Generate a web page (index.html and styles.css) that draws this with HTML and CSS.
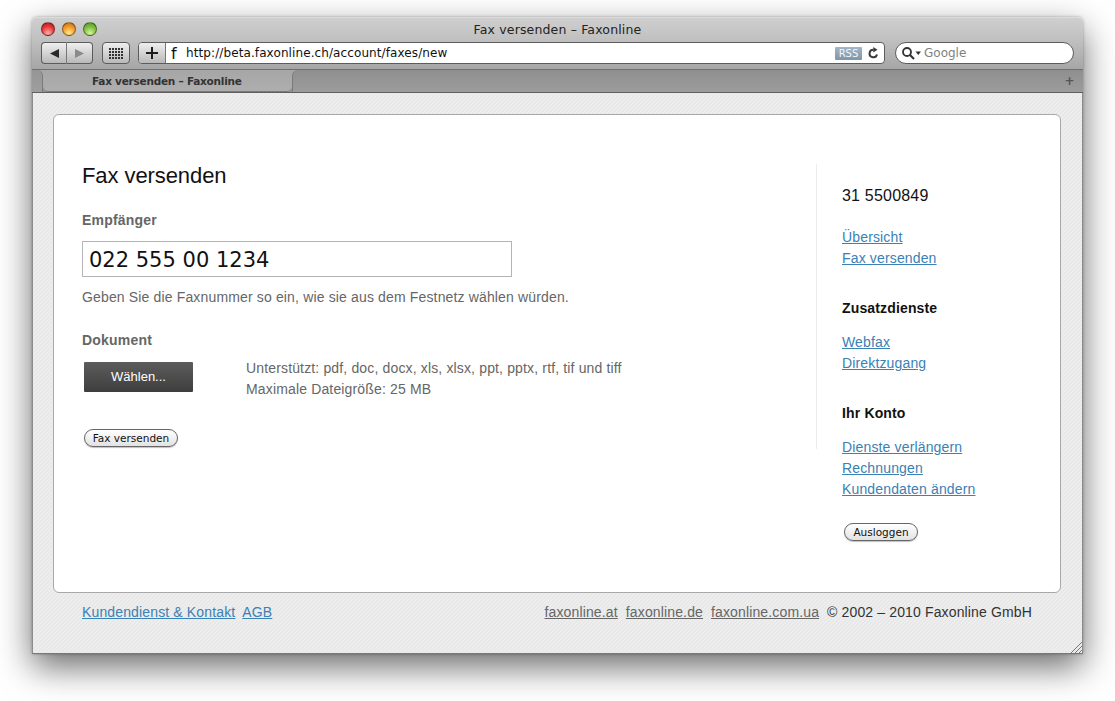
FILE: index.html
```html
<!DOCTYPE html>
<html lang="de">
<head>
<meta charset="utf-8">
<title>Fax versenden – Faxonline</title>
<link rel="stylesheet" href="styles.css">
</head>
<body>
<div class="window">
  <header class="chrome">
    <div class="titlebar">
      <div class="lights"><span class="light red"></span><span class="light amber"></span><span class="light green"></span></div>
      <div class="title">Fax versenden – Faxonline</div>
    </div>
    <div class="toolbar">
      <div class="btn-group">
        <span class="tool nav"><svg width="9" height="9" viewBox="0 0 9 9"><path d="M0 4.500 L9 0 V9 Z" fill="#2a2a2a"/></svg></span>
        <span class="tool nav"><svg width="9" height="9" viewBox="0 0 9 9"><path d="M9 4.500 L0 0 V9 Z" fill="#8a8a8a"/></svg></span>
      </div>
      <span class="tool grid-btn"><svg width="14" height="11" viewBox="0 0 14 11"><g fill="none" stroke="#333" stroke-width="2" stroke-dasharray="2 1"><path d="M0 1H14M0 4H14M0 7H14M0 10H14"/></g></svg></span>
      <div class="address">
        <span class="tool add"><svg width="12" height="12" viewBox="0 0 12 12"><path d="M5 0h2v5h5v2H7v5H5V7H0V5h5z" fill="#1c1c1c"/></svg></span>
        <span class="favicon">f</span>
        <span class="url">http://beta.faxonline.ch/account/faxes/new</span>
        <span class="rss">RSS</span>
        <svg class="reload" width="11" height="12" viewBox="0 0 11 12"><path d="M9 7.500A3.800 3.800 0 1 1 5.500 2.700" fill="none" stroke="#3a3a3a" stroke-width="2"/><path d="M5.300 0 L9.500 2.700 L5.300 5.400 Z" fill="#3a3a3a"/></svg>
      </div>
      <div class="search">
        <svg width="20" height="13" viewBox="0 0 20 13"><circle cx="5" cy="5" r="4" fill="none" stroke="#333" stroke-width="1.800"/><path d="M8 8 L12 12" stroke="#333" stroke-width="2.200"/><path d="M13.500 4.500 H19 L16.250 8 Z" fill="#333"/></svg>
        <span class="search-text">Google</span>
      </div>
    </div>
    <div class="tabbar">
      <span class="tab-stub"></span>
      <div class="tab">Fax versenden – Faxonline</div>
      <div class="tab-rest"><span class="tab-add">+</span></div>
    </div>
  </header>
  <main class="page">
    <div class="card">
      <section class="content">
        <h1>Fax versenden</h1>
        <h2 class="label">Empfänger</h2>
        <input class="fax-input" type="text" value="022 555 00 1234">
        <p class="hint">Geben Sie die Faxnummer so ein, wie sie aus dem Festnetz wählen würden.</p>
        <h2 class="label doc-label">Dokument</h2>
        <div class="upload">
          <span class="choose">Wählen...</span>
          <p class="formats">Unterstützt: pdf, doc, docx, xls, xlsx, ppt, pptx, rtf, tif und tiff<br>Maximale Dateigröße: 25 MB</p>
        </div>
        <button class="pill send" type="button">Fax versenden</button>
      </section>
      <aside class="sidebar">
        <div class="fax-no">31 5500849</div>
        <nav class="links"><a href="#">Übersicht</a><a href="#">Fax versenden</a></nav>
        <h3>Zusatzdienste</h3>
        <nav class="links"><a href="#">Webfax</a><a href="#">Direktzugang</a></nav>
        <h3>Ihr Konto</h3>
        <nav class="links"><a href="#">Dienste verlängern</a><a href="#">Rechnungen</a><a href="#">Kundendaten ändern</a></nav>
        <button class="pill logout" type="button">Ausloggen</button>
      </aside>
    </div>
    <footer class="footer">
      <div class="foot-left"><a href="#">Kundendienst &amp; Kontakt</a><a href="#">AGB</a></div>
      <div class="foot-right"><a href="#">faxonline.at</a><a href="#">faxonline.de</a><a href="#">faxonline.com.ua</a><span>© 2002 – 2010 Faxonline GmbH</span></div>
    </footer>
    <svg class="grip" width="12" height="12" viewBox="0 0 12 12"><path d="M1 12 L12 1 M5 12 L12 5 M9 12 L12 9" stroke="#777" stroke-width="1" fill="none"/></svg>
  </main>
</div>
</body>
</html>
```
FILE: styles.css
```css
* { box-sizing: border-box; }
html, body { margin: 0; height: 100%; }
body { background: #fff; font-family: "Liberation Sans", Arial, sans-serif; overflow: hidden; }

.window {
  position: absolute;
  left: 32px;
  top: 17px;
  width: 1051px;
  height: 637px;
  display: flex;
  flex-direction: column;
  border-radius: 5px 5px 0 0;
  box-shadow: 0 13px 34px rgba(0,0,0,.58), 0 0 3px rgba(0,0,0,.3);
}

/* Browser chrome */
.chrome { flex: none; }
.titlebar {
  height: 23px;
  position: relative;
  display: flex;
  align-items: center;
  justify-content: center;
  border-radius: 5px 5px 0 0;
  border-top: 1px solid #dcdcdc;
  background: linear-gradient(#cfcfcf, #c0c0c0);
}
.lights { position: absolute; left: 9px; top: 4px; display: flex; gap: 7px; }
.light { width: 14px; height: 14px; border-radius: 50%; border: 1px solid rgba(0,0,0,.4); }
.red { background: radial-gradient(circle at 50% 85%, #ffb0a8, #e5383a 55%, #a81a20); }
.amber { background: radial-gradient(circle at 50% 85%, #ffe88a, #f09a28 55%, #b9651a); }
.green { background: radial-gradient(circle at 50% 85%, #d8f59a, #7fbe40 55%, #4d8d27); }
.title { font: 12.500px "DejaVu Sans", sans-serif; letter-spacing: .15px; color: #222; }

.toolbar {
  height: 30px;
  display: flex;
  align-items: flex-start;
  padding: 2px 9px 0;
  background: linear-gradient(#c0c0c0, #a6a6a6);
  border-bottom: 1px solid #6f6f6f;
}
.tool {
  display: flex;
  align-items: center;
  justify-content: center;
  height: 22px;
  border: 1px solid #5c5c5c;
  background: linear-gradient(#efefef, #b9b9b9);
}
.btn-group { display: flex; }
.nav { width: 26px; }
.nav:first-child { border-radius: 4px 0 0 4px; border-right: 1px solid #777; }
.nav:last-child { border-radius: 0 4px 4px 0; border-left: 0; }
.grid-btn { width: 28px; margin-left: 9px; border-radius: 4px; }
.address {
  margin-left: 8px;
  width: 747px;
  height: 22px;
  display: flex;
  align-items: center;
  background: #fff;
  border: 1px solid #5c5c5c;
  border-radius: 4px;
}
.add { width: 27px; height: 20px; border: 0; border-right: 1px solid #777; border-radius: 3px 0 0 3px; flex: none; }
.favicon { font: 16px "DejaVu Sans", sans-serif; color: #111; margin-left: 5px; width: 15px; }
.url { flex: 1; font: 12px "DejaVu Sans", sans-serif; color: #111; letter-spacing: .1px; }
.rss {
  font: 10px "DejaVu Sans", sans-serif;
  color: #f4f6f8;
  background: linear-gradient(#a3b5c6, #7e95aa);
  border-radius: 1px;
  width: 27px;
  height: 13px;
  line-height: 13px;
  text-align: center;
}
.reload { margin: 0 5px 0 6px; }
.search {
  margin-left: 10px;
  width: 179px;
  height: 22px;
  display: flex;
  align-items: center;
  gap: 2px;
  padding-left: 6px;
  background: #fff;
  border: 1px solid #5c5c5c;
  border-radius: 11px;
}
.search-text { font: 12px "DejaVu Sans", sans-serif; color: #7f7f7f; }

.tabbar {
  height: 23px;
  display: flex;
  align-items: stretch;
  background: linear-gradient(#a6a6a6 0 15px, #969696 15px);
  border-bottom: 1px solid #5f5f5f;
}
.tab-stub { width: 11px; background: linear-gradient(#969696, #9e9e9e); border-right: 1px solid #7a7a7a; border-radius: 0 6px 0 0; }
.tab {
  width: 249px;
  background: linear-gradient(#a6a6a6, #aeaeae);
  border-bottom: 1px solid #7a7a7a;
  border-radius: 0 0 5px 5px;
  font: bold 10.500px/21px "DejaVu Sans", sans-serif;
  color: #333;
  padding-left: 49px;
  padding-top: 1px;
  letter-spacing: -.24px;
}
.tab-rest {
  flex: 1;
  display: flex;
  justify-content: flex-end;
  background: linear-gradient(#8f8f8f, #9c9c9c);
  border-left: 1px solid #7a7a7a;
  border-radius: 6px 0 0 0;
}
.tab-add { width: 27px; text-align: center; font: bold 12px/22px "DejaVu Sans", sans-serif; color: #555; }

/* Page */
.page {
  position: relative;
  flex: 1;
  min-height: 0;
  padding: 21px 21px 0 20px;
  background: #ededed url("data:image/svg+xml,%3Csvg xmlns='http://www.w3.org/2000/svg' width='4' height='4' shape-rendering='crispEdges'%3E%3Cg fill='%23e4e4e4'%3E%3Crect x='3' y='0' width='1' height='1'/%3E%3Crect x='2' y='1' width='1' height='1'/%3E%3Crect x='1' y='2' width='1' height='1'/%3E%3Crect x='0' y='3' width='1' height='1'/%3E%3C/g%3E%3C/svg%3E") 0 0 / 4px 4px;
  border: 1px solid #8c8c8c;
  border-top: 0;
  border-bottom-color: #777;
}
.card {
  height: 479px;
  display: flex;
  background: #fff;
  border: 1px solid #a8a8a8;
  border-radius: 6px;
  padding: 49px 0 0 28px;
}
.content { width: 735px; height: 285px; border-right: 1px solid #ececec; color: #666; font-size: 14px; letter-spacing: .15px; }
h1 { margin: 0; font-size: 22px; font-weight: 400; line-height: 24px; letter-spacing: -.08px; color: #111; }
.label { margin: 22px 0 0; font-size: 14px; line-height: 20px; font-weight: 700; letter-spacing: .2px; color: #666; }
.fax-input {
  display: block;
  width: 430px;
  height: 36px;
  margin-top: 11px;
  padding: 1px 6px 0;
  border: 1px solid #b4b4b4;
  background: #fff;
  font: 21px "DejaVu Sans", sans-serif;
  color: #111;
}
.hint { margin: 10px 0 0; line-height: 20px; }
.doc-label { margin-top: 23px; }
.upload { display: flex; margin-top: 8px; }
.choose {
  width: 109px;
  height: 30px;
  margin: 4px 0 0 2px;
  background: linear-gradient(#5c5c5c, #3e3e3e);
  border-radius: 1px;
  color: #fff;
  font-size: 13px;
  line-height: 30px;
  text-align: center;
  letter-spacing: 0;
  flex: none;
}
.formats { margin: 0 0 0 53px; line-height: 21px; }
.pill {
  display: block;
  height: 18px;
  padding: 0;
  border: 1px solid #666;
  border-radius: 9px;
  background: linear-gradient(#fff, #e2e2e2);
  font: 10.500px "DejaVu Sans", sans-serif;
  color: #111;
  box-shadow: 0 1px 1px rgba(0,0,0,.25);
}
.send { width: 94px; margin: 29px 0 0 2px; }
.sidebar { padding: 22px 0 0 25px; font-size: 14px; letter-spacing: .15px; }
.fax-no { font-size: 16px; line-height: 20px; letter-spacing: .2px; color: #111; }
.links { display: flex; flex-direction: column; align-items: flex-start; margin-top: 21px; }
.links a { line-height: 21px; }
a { color: #3a81b5; }
h3 { margin: 29px 0 0; font-size: 14px; line-height: 20px; font-weight: 700; letter-spacing: .15px; color: #111; }
.sidebar h3 + .links { margin-top: 14px; }
.logout { width: 74px; margin: 23px 0 0 2px; letter-spacing: 0; }

.footer {
  display: flex;
  justify-content: space-between;
  padding: 9px 29px 0 29px;
  font-size: 14px;
  line-height: 20px;
  letter-spacing: .14px;
  color: #333;
}
.foot-left { display: flex; gap: 7px; }
.foot-right { display: flex; gap: 8px; }
.foot-right a { color: #666; }
.grip { position: absolute; right: 0; bottom: 0; }
```
